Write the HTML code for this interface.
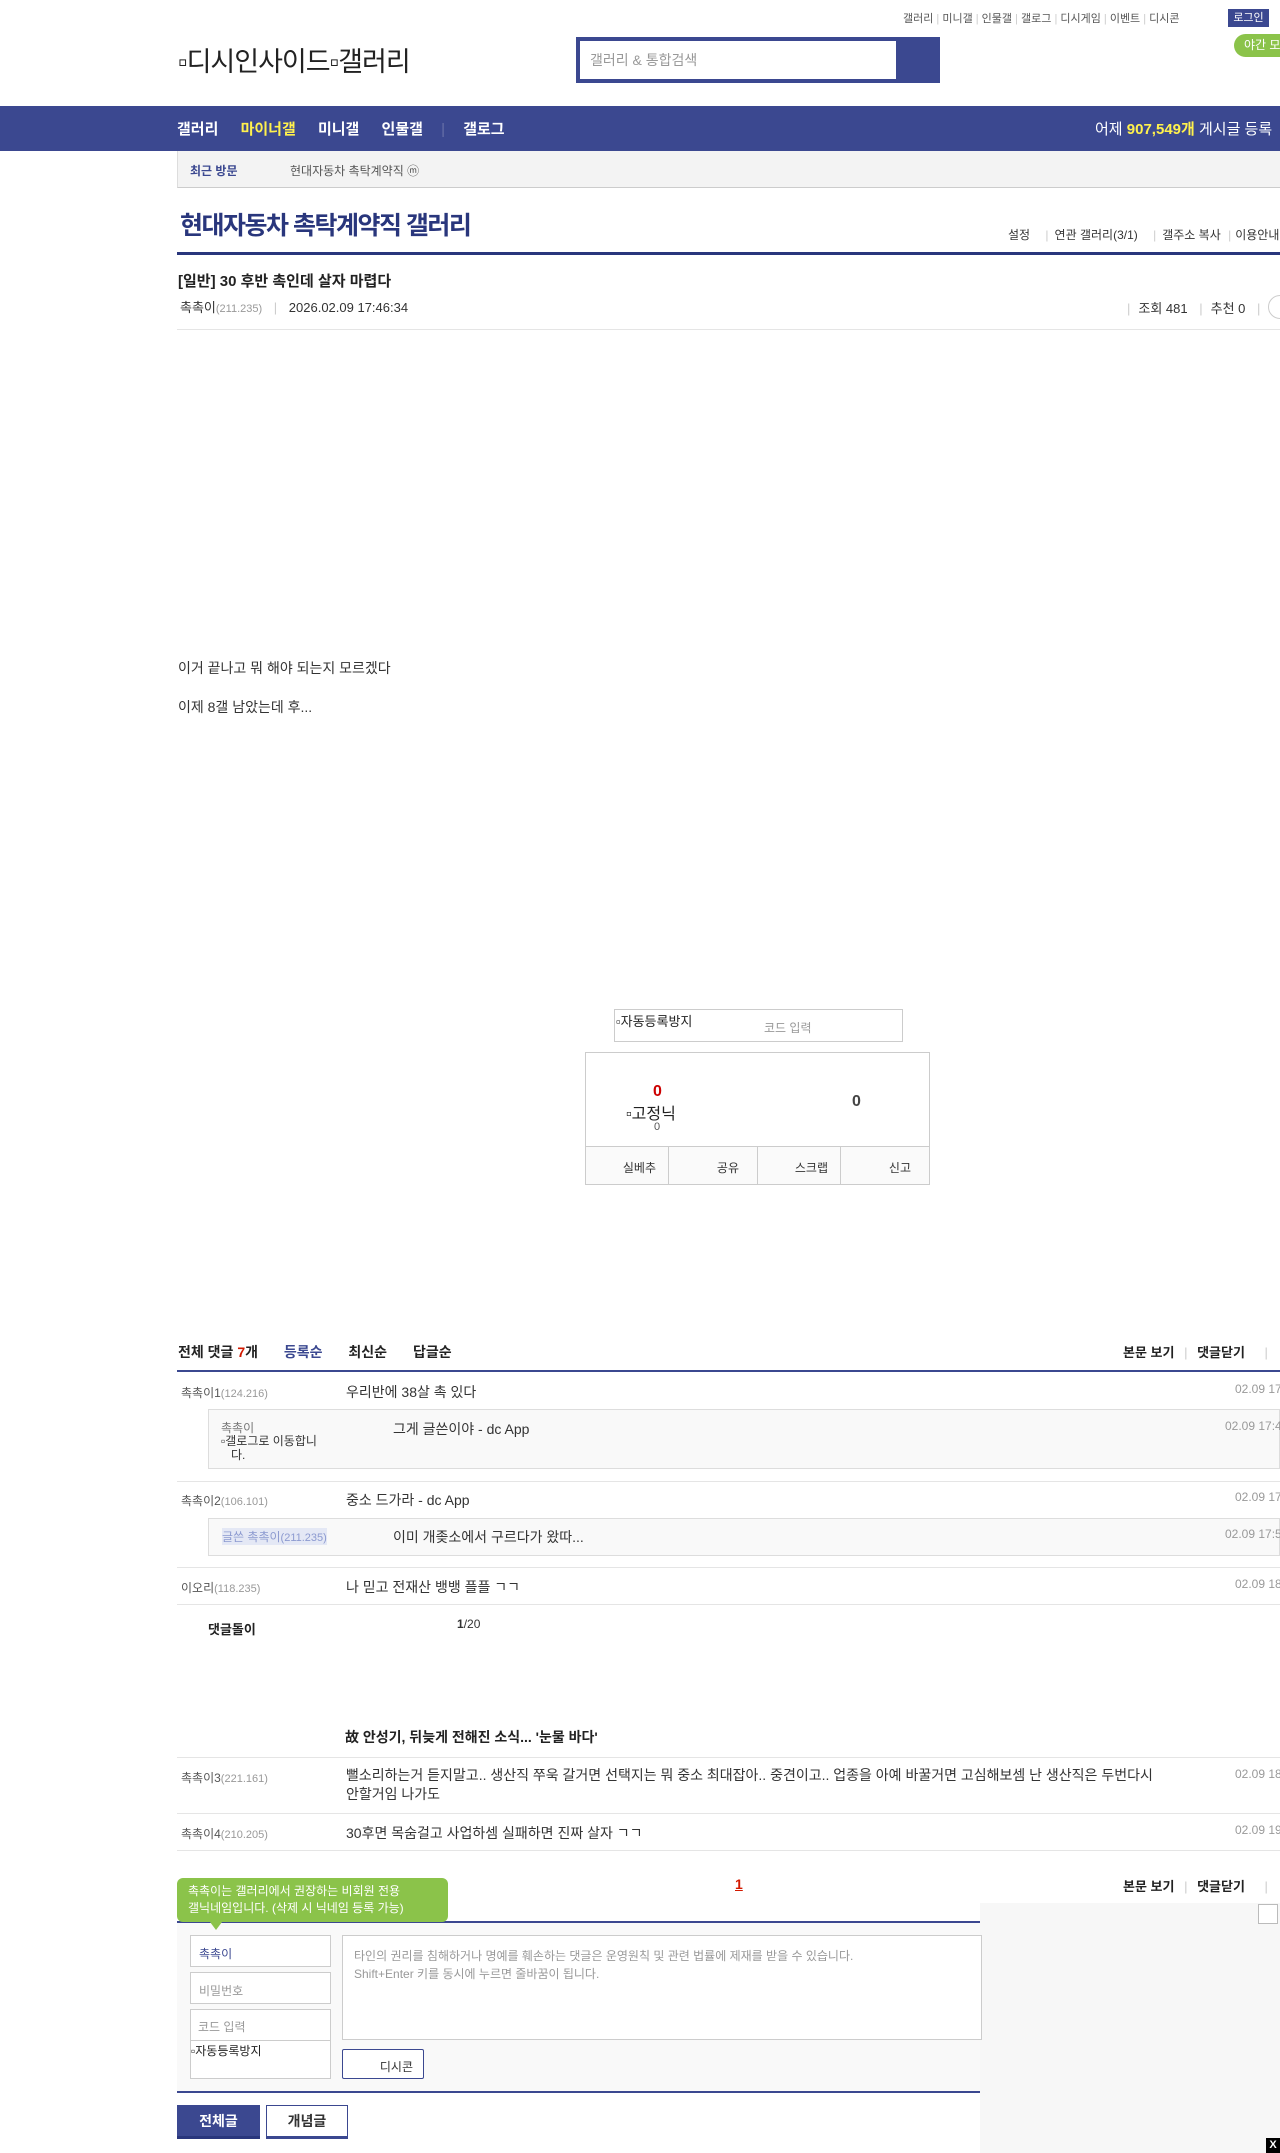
<!DOCTYPE html>
<html><head><meta charset="utf-8"><style>
*{margin:0;padding:0;box-sizing:border-box}
body{width:1280px;height:2153px;overflow:hidden;position:relative;background:#fff;font-family:"Liberation Sans","Noto Sans CJK KR",sans-serif;color:#333;font-size:13px}
.a{position:absolute;white-space:nowrap}
.blue{color:#3b4890}
.g{color:#999}
.line{position:absolute;left:177px;right:0;height:1px;background:#e5e5e5}
</style></head><body>
<div class="a" style="top:10px;left:903px;font-size:11px;color:#555">갤러리 <span style="color:#ccc">|</span> 미니갤 <span style="color:#ccc">|</span> 인물갤 <span style="color:#ccc">|</span> 갤로그 <span style="color:#ccc">|</span> 디시게임 <span style="color:#ccc">|</span> 이벤트 <span style="color:#ccc">|</span> 디시콘</div>
<div class="a" style="top:9px;left:1228px;width:41px;height:18px;background:#3b4890;color:#fff;font-size:11px;text-align:center;line-height:18px">로그인</div>
<div class="a" style="top:34px;left:1234px;width:60px;height:23px;background:#8bc34a;border-radius:12px;color:#fff;font-size:12px;line-height:23px;padding-left:10px">야간 모드</div>
<div class="a" style="top:40px;left:178px;font-size:27px;color:#222;letter-spacing:-1px">▫디시인사이드▫갤러리</div>
<div class="a" style="top:37px;left:576px;width:364px;height:46px;background:#3b4890"></div>
<div class="a" style="top:41px;left:580px;width:316px;height:38px;background:#fff;color:#999;font-size:14px;line-height:38px;padding-left:10px">갤러리 &amp; 통합검색</div>
<div class="a" style="top:106px;left:0;width:1280px;height:45px;background:#3b4890"></div>
<div class="a" style="top:118px;left:177px;font-size:15px;font-weight:bold;color:#fff">갤러리 <span style="margin-left:18px;color:#fff14d">마이너갤</span> <span style="margin-left:18px">미니갤</span> <span style="margin-left:18px">인물갤</span> <span style="margin-left:14px;color:#6870a8;font-weight:normal">|</span> <span style="margin-left:14px">갤로그</span></div>
<div class="a" style="top:118px;left:1095px;font-size:15px;color:#fff">어제 <b style="color:#fff14d">907,549개</b> 게시글 등록</div>
<div class="a" style="top:151px;left:177px;right:0;height:37px;background:#f3f3f3;border-bottom:1px solid #ccc;border-left:1px solid #ddd"></div>
<div class="a" style="top:162px;left:190px;font-size:12px;font-weight:bold;color:#3b4890">최근 방문</div>
<div class="a" style="top:162px;left:290px;font-size:12px;color:#555">현대자동차 촉탁계약직 ⓜ</div>
<div class="a" style="top:206px;left:180px;font-size:25px;font-weight:bold;color:#29367c;letter-spacing:-1.5px">현대자동차 촉탁계약직 갤러리</div>
<div class="a" style="top:226px;left:1008px;font-size:12px;color:#333">설정 <span style="color:#ccc;margin:0 6px 0 12px">|</span>연관 갤러리(3/1) <span style="color:#ccc;margin:0 6px 0 12px">|</span>갤주소 복사 <span style="color:#ccc;margin:0 4px">|</span>이용안내</div>
<div class="a" style="top:252px;left:177px;right:0;height:3px;background:#29367c"></div>
<div class="a" style="top:270px;left:178px;font-size:15px;font-weight:bold;color:#222">[일반] 30 후반 촉인데 살자 마렵다</div>
<div class="a" style="top:297px;left:180px;font-size:13px;color:#333">촉촉이<span class="g" style="font-size:11px">(211.235)</span> <span style="color:#ccc;margin:0 8px">|</span> 2026.02.09 17:46:34</div>
<div class="a" style="top:298px;left:1127px;font-size:13px"><span style="color:#ccc;margin-right:8px">|</span>조회 481 <span style="color:#ccc;margin:0 8px">|</span>추천 0 <span style="color:#ccc;margin:0 8px">|</span></div>
<div class="a" style="top:295px;left:1268px;width:24px;height:24px;border:1px solid #ccc;border-radius:12px"></div>
<div class="line" style="top:329px"></div>
<div class="a" style="top:658px;left:178px;font-size:14px">이거 끝나고 뭐 해야 되는지 모르겠다</div>
<div class="a" style="top:697px;left:178px;font-size:14px">이제 8갤 남았는데 후...</div>
<div class="a" style="top:1009px;left:614px;width:289px;height:33px;border:1px solid #ccc"></div>
<div class="a" style="top:1011px;left:616px;font-size:13px;color:#222">▫자동등록방지</div>
<div class="a" style="top:1019px;left:764px;font-size:12px;color:#999">코드 입력</div>
<div class="a" style="top:1052px;left:585px;width:345px;height:133px;border:1px solid #ccc"></div>
<div class="a" style="top:1083px;left:653px;font-size:16px;font-weight:bold;color:#c00">0</div>
<div class="a" style="top:1100px;left:626px;font-size:16px;color:#222">▫고정닉</div>
<div class="a" style="top:1121px;left:654px;font-size:11px;color:#555">0</div>
<div class="a" style="top:1093px;left:852px;font-size:16px;font-weight:bold;color:#444">0</div>
<div class="a" style="top:1146px;left:585px;width:345px;height:39px;border:1px solid #ccc;background:#fafafa;display:flex">
<div style="flex:1;border-right:1px solid #ccc;text-align:right;padding:12px 12px 0 0;font-size:12px">실베추</div>
<div style="flex:1;border-right:1px solid #ccc;text-align:right;padding:12px 18px 0 0;font-size:12px">공유</div>
<div style="flex:1;border-right:1px solid #ccc;text-align:right;padding:12px 12px 0 0;font-size:12px">스크랩</div>
<div style="flex:1;text-align:right;padding:12px 18px 0 0;font-size:12px">신고</div></div>
<div class="a" style="top:1342px;left:178px;font-size:14px;font-weight:bold;color:#222">전체 댓글 <span style="color:#d31900">7</span>개 <span class="blue" style="margin-left:22px">등록순</span> <span style="margin-left:22px">최신순</span> <span style="margin-left:22px">답글순</span></div>
<div class="a" style="top:1342px;left:1123px;font-size:13px;font-weight:bold;color:#222">본문 보기 <span style="color:#ccc;font-weight:normal;margin:0 6px">|</span> 댓글닫기 <span style="color:#ccc;font-weight:normal;margin-left:16px">|</span></div>
<div class="a" style="top:1370px;left:177px;right:0;height:2px;background:#3b4890"></div>
<div class="a" style="top:1384px;left:181px;font-size:12px;color:#555">촉촉이1<span class="g" style="font-size:11px">(124.216)</span></div>
<div class="a" style="top:1382px;left:346px;font-size:14px">우리반에 38살 촉 있다</div>
<div class="a" style="top:1382px;left:1235px;font-size:12px;color:#999">02.09 17:5</div>
<div class="a" style="top:1409px;left:208px;right:0;height:60px;background:#f9f9f9;border:1px solid #ddd"></div>
<div class="a" style="top:1419px;left:221px;font-size:12px;color:#777">촉촉이</div>
<div class="a" style="top:1434px;left:221px;font-size:12px;color:#333;white-space:normal;width:120px;line-height:14px">▫갤로그로 이동합니<br>&nbsp;&nbsp;&nbsp;다.</div>
<div class="a" style="top:1419px;left:393px;font-size:14px">그게 글쓴이야 - dc App</div>
<div class="a" style="top:1419px;left:1225px;font-size:12px;color:#999">02.09 17:45</div>
<div class="line" style="top:1481px"></div>
<div class="a" style="top:1492px;left:181px;font-size:12px;color:#555">촉촉이2<span class="g" style="font-size:11px">(106.101)</span></div>
<div class="a" style="top:1490px;left:346px;font-size:14px">중소 드가라 - dc App</div>
<div class="a" style="top:1490px;left:1235px;font-size:12px;color:#999">02.09 17:5</div>
<div class="a" style="top:1518px;left:208px;right:0;height:38px;background:#f9f9f9;border:1px solid #ddd"></div>
<div class="a" style="top:1528px;left:222px;font-size:12px;color:#8c9ad0;background:#e4e8f5">글쓴 촉촉이<span style="font-size:11px">(211.235)</span></div>
<div class="a" style="top:1527px;left:393px;font-size:14px">이미 개좆소에서 구르다가 왔따...</div>
<div class="a" style="top:1527px;left:1225px;font-size:12px;color:#999">02.09 17:5</div>
<div class="line" style="top:1567px"></div>
<div class="a" style="top:1579px;left:181px;font-size:12px;color:#555">이오리<span class="g" style="font-size:11px">(118.235)</span></div>
<div class="a" style="top:1577px;left:346px;font-size:14px">나 믿고 전재산 뱅뱅 플플 ㄱㄱ</div>
<div class="a" style="top:1577px;left:1235px;font-size:12px;color:#999">02.09 18:</div>
<div class="line" style="top:1604px"></div>
<div class="a" style="top:1619px;left:208px;font-size:13px;font-weight:bold;color:#222">댓글돌이</div>
<div class="a" style="top:1617px;left:457px;font-size:12px"><b>1</b>/20</div>
<div class="a" style="top:1727px;left:345px;font-size:14px;font-weight:bold;color:#222">故 안성기, 뒤늦게 전해진 소식... '눈물 바다'</div>
<div class="line" style="top:1757px"></div>
<div class="a" style="top:1769px;left:181px;font-size:12px;color:#555">촉촉이3<span class="g" style="font-size:11px">(221.161)</span></div>
<div class="a" style="top:1766px;left:346px;font-size:14px;line-height:19px">뻘소리하는거 듣지말고.. 생산직 쭈욱 갈거면 선택지는 뭐 중소 최대잡아.. 중견이고.. 업종을 아예 바꿀거면 고심해보셈 난 생산직은 두번다시<br>안할거임 나가도</div>
<div class="a" style="top:1767px;left:1235px;font-size:12px;color:#999">02.09 18:</div>
<div class="line" style="top:1813px"></div>
<div class="a" style="top:1825px;left:181px;font-size:12px;color:#555">촉촉이4<span class="g" style="font-size:11px">(210.205)</span></div>
<div class="a" style="top:1823px;left:346px;font-size:14px">30후면 목숨걸고 사업하셈 실패하면 진짜 살자 ㄱㄱ</div>
<div class="a" style="top:1823px;left:1235px;font-size:12px;color:#999">02.09 19:</div>
<div class="line" style="top:1850px"></div>
<div class="a" style="top:1876px;left:735px;font-size:14px;font-weight:bold;color:#d31900;text-decoration:underline">1</div>
<div class="a" style="top:1876px;left:1123px;font-size:13px;font-weight:bold;color:#222">본문 보기 <span style="color:#ccc;font-weight:normal;margin:0 6px">|</span> 댓글닫기 <span style="color:#ccc;font-weight:normal;margin-left:16px">|</span></div>
<div class="a" style="top:1903px;left:980px;width:300px;height:250px;background:#f7f7f7"></div>
<div class="a" style="top:1904px;left:1258px;width:20px;height:20px;border:1px solid #bbb;background:#fff"></div>
<div class="a" style="top:2138px;left:1266px;width:14px;height:15px;background:#000;color:#fff;font-size:11px;font-weight:bold;text-align:center;line-height:15px">X</div>
<div class="a" style="top:1921px;left:177px;width:803px;height:172px;background:#f9f9f9;border-top:2px solid #3b4890;border-bottom:2px solid #3b4890"></div>
<div class="a" style="top:1878px;left:177px;width:271px;height:44px;background:#8bc34a;border-radius:6px;color:#fff;font-size:12px;line-height:17px;padding:5px 11px">촉촉이는 갤러리에서 권장하는 비회원 전용<br>갤닉네임입니다. (삭제 시 닉네임 등록 가능)</div>
<div class="a" style="top:1922px;left:210px;width:0;height:0;border-left:6px solid transparent;border-right:6px solid transparent;border-top:8px solid #8bc34a"></div>
<div class="a" style="top:1935px;left:190px;width:141px;height:32px;background:#fff;border:1px solid #ccc;font-size:12px;color:#3b4890;padding:9px 8px">촉촉이</div>
<div class="a" style="top:1972px;left:190px;width:141px;height:32px;background:#fff;border:1px solid #ccc;font-size:12px;color:#999;padding:9px 8px">비밀번호</div>
<div class="a" style="top:2009px;left:190px;width:141px;height:70px;background:#fff;border:1px solid #ccc"></div>
<div class="a" style="top:2018px;left:198px;font-size:12px;color:#999">코드 입력</div>
<div class="a" style="top:2040px;left:190px;width:141px;height:1px;background:#ccc"></div>
<div class="a" style="top:2042px;left:191px;font-size:12px;color:#222">▫자동등록방지</div>
<div class="a" style="top:1935px;left:342px;width:640px;height:105px;background:#fff;border:1px solid #ccc"></div>
<div class="a" style="top:1947px;left:354px;font-size:12px;color:#999;line-height:18px">타인의 권리를 침해하거나 명예를 훼손하는 댓글은 운영원칙 및 관련 법률에 제재를 받을 수 있습니다.<br>Shift+Enter 키를 동시에 누르면 줄바꿈이 됩니다.</div>
<div class="a" style="top:2049px;left:342px;width:82px;height:30px;background:#fff;border:1px solid #3b4890;border-radius:2px;font-size:12px;color:#333;text-align:right;padding:8px 10px 0 0">디시콘</div>
<div class="a" style="top:2105px;left:177px;width:83px;height:34px;background:#3b4890;border-bottom:3px solid #29367c;color:#fff;font-size:14px;font-weight:bold;text-align:center;line-height:32px">전체글</div>
<div class="a" style="top:2105px;left:266px;width:82px;height:34px;background:#fff;border:1px solid #3b4890;border-bottom:3px solid #3b4890;color:#333;font-size:14px;font-weight:bold;text-align:center;line-height:30px">개념글</div>
</body></html>
